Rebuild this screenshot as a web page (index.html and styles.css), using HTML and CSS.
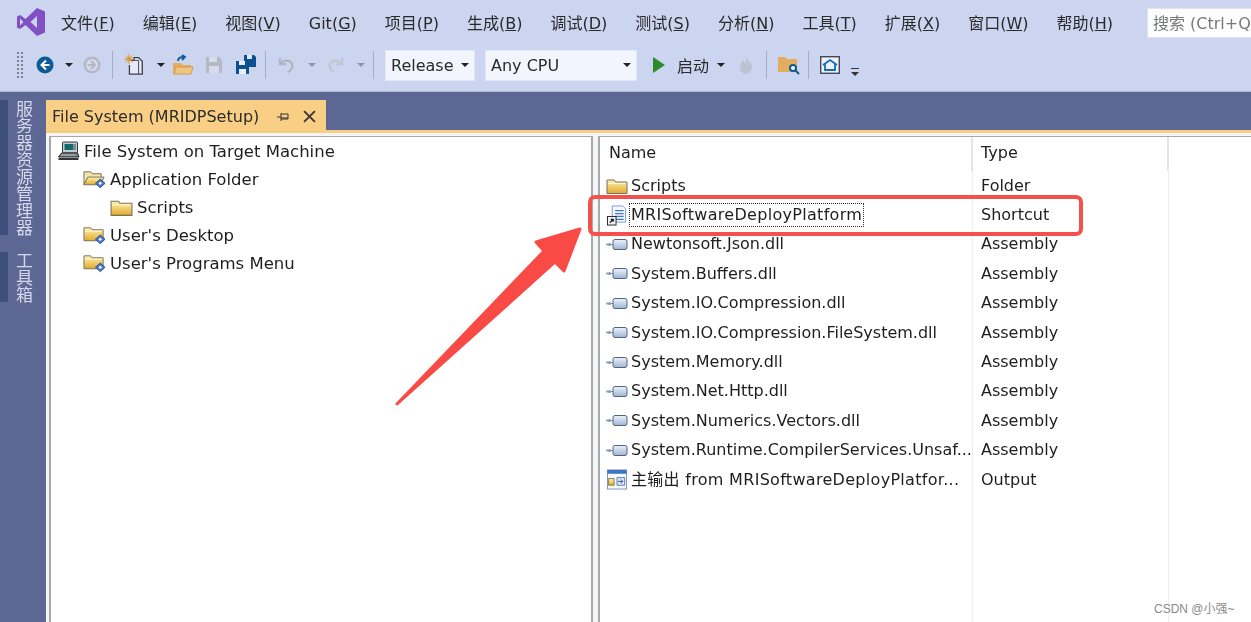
FILE: index.html
```html
<!DOCTYPE html>
<html lang="zh-CN">
<head>
<meta charset="utf-8">
<title>File System (MRIDPSetup)</title>
<link rel="stylesheet" href="styles.css">
</head>
<body>
<svg class="defs" width="0" height="0" aria-hidden="true">
  <defs>
    <linearGradient id="gold" x1="0" y1="0" x2="0" y2="1"><stop offset="0" stop-color="#fff3b0"/><stop offset="1" stop-color="#e0a92e"/></linearGradient>
    <linearGradient id="asm" x1="0" y1="0" x2="0" y2="1"><stop offset="0" stop-color="#eef3fa"/><stop offset="1" stop-color="#9db4d2"/></linearGradient>
    <symbol id="folder" viewBox="0 0 22 18">
      <path d="M1 3.500h7l1.500 2H21V17H1z" fill="url(#gold)" stroke="#77715c"/>
      <path d="M2 7h18" stroke="#fff8d4"/>
    </symbol>
    <symbol id="folder-sp" viewBox="0 0 24 20">
      <path d="M1 2.500h7l1.500 2H21V16H1z" fill="url(#gold)" stroke="#77715c"/>
      <path d="M2 6h18" stroke="#fff8d4"/>
      <path d="M18 10l5 4.500-5 4.500-5-4.500z" fill="#4a79c9" stroke="#2c4f91"/>
      <circle cx="18" cy="14.500" r="1.400" fill="#fff"/>
    </symbol>
    <symbol id="folder-open" viewBox="0 0 24 20">
      <path d="M1 2.500h7l1.500 2H19V9H5L1 16z" fill="#f4e4a8" stroke="#77715c"/>
      <path d="M1 16L5 8h17l-4 8z" fill="url(#gold)" stroke="#77715c"/>
      <path d="M18 10l5 4.500-5 4.500-5-4.500z" fill="#4a79c9" stroke="#2c4f91"/>
      <circle cx="18" cy="14.500" r="1.400" fill="#fff"/>
    </symbol>
    <symbol id="computer" viewBox="0 0 22 20">
      <rect x="5" y="1" width="15" height="11" rx="1" fill="#c7ccd2" stroke="#33383d"/>
      <rect x="7" y="3" width="9" height="6" fill="#14696f"/>
      <path d="M17.500 3v6" stroke="#6c7278" stroke-width="1.500"/>
      <path d="M4 12h16l1.500 4H1z" fill="#80868c" stroke="#22262a"/>
      <path d="M1 17h20v2H1z" fill="#33373b"/>
      <path d="M4 14h14" stroke="#e4e6e8" stroke-dasharray="1 1"/>
    </symbol>
    <symbol id="shortcut" viewBox="0 0 22 22">
      <path d="M6 1h11l3 3v14H6z" fill="#f4f8ff" stroke="#7f9bc9"/>
      <path d="M9 6h9M9 9h9M9 12h9M9 15h9" stroke="#3f74d6" stroke-width="1.300"/>
      <rect x="1" y="12" width="9" height="9" fill="#f2f2f2" stroke="#222"/>
      <path d="M3.500 18.500l3-3M4.500 15h2.500v2.500" stroke="#111" stroke-width="1.300" fill="none"/>
    </symbol>
    <symbol id="assembly" viewBox="0 0 22 14">
      <path d="M0 7h2" stroke="#9aa8bf" stroke-width="2"/>
      <circle cx="3.500" cy="7" r="1.500" fill="#7f90ad"/>
      <path d="M5 7h2" stroke="#7f90ad"/>
      <rect x="7" y="2" width="14" height="10" rx="2" fill="url(#asm)" stroke="#4e6484"/>
    </symbol>
    <symbol id="output" viewBox="0 0 22 22">
      <rect x="1" y="1" width="20" height="20" fill="#f5f8fd" stroke="#7b93b8"/>
      <path d="M1 1h20v4H1z" fill="#3f72c4"/>
      <path d="M2 10h6v7H2z" fill="url(#gold)" stroke="#857a55"/>
      <path d="M11 9h8v8h-8z" fill="#dbe7f8" stroke="#5a7db5"/>
      <path d="M12 13h5M15 11l2 2-2 2" stroke="#2456a8" fill="none"/>
    </symbol>
  </defs>
</svg>

<header class="menubar">
  <svg class="logo" viewBox="0 0 28 28"><path fill-rule="evenodd" fill="#8150c4" d="M20 0l8 3.500v21L20 28 8.500 17 3 21l-3-1.500v-11L3 7l5.500 4zm0 8l-6.500 6 6.500 6zM3 10.500v7L6.500 14z"/></svg>
  <nav class="menu">
    <span class="menu-item">文件(<u>F</u>)</span>
    <span class="menu-item">编辑(<u>E</u>)</span>
    <span class="menu-item">视图(<u>V</u>)</span>
    <span class="menu-item">Git(<u>G</u>)</span>
    <span class="menu-item">项目(<u>P</u>)</span>
    <span class="menu-item">生成(<u>B</u>)</span>
    <span class="menu-item">调试(<u>D</u>)</span>
    <span class="menu-item">测试(<u>S</u>)</span>
    <span class="menu-item">分析(<u>N</u>)</span>
    <span class="menu-item">工具(<u>T</u>)</span>
    <span class="menu-item">扩展(<u>X</u>)</span>
    <span class="menu-item">窗口(<u>W</u>)</span>
    <span class="menu-item">帮助(<u>H</u>)</span>
  </nav>
  <div class="search">搜索 (Ctrl+Q)</div>
</header>

<div class="toolbar">
  <span class="grip"></span>
  <svg class="tool w18" viewBox="0 0 18 18"><circle cx="9" cy="9" r="8.500" fill="#0e5a96"/><path d="M10 4.500L5.500 9l4.500 4.500M6 9h7.500" stroke="#fff" stroke-width="2" fill="none"/></svg>
  <span class="caret c-nav"></span>
  <svg class="tool w18 m-fwd" viewBox="0 0 18 18"><circle cx="9" cy="9" r="8.500" fill="#b3b8c4"/><circle cx="9" cy="9" r="6" fill="#d5dbec"/><path d="M8 5l4 4-4 4M4.500 9H12" stroke="#b3b8c4" stroke-width="2" fill="none"/></svg>
  <span class="sep s1"></span>
  <svg class="tool w22" viewBox="0 0 22 24"><path d="M8 7h3V4h5l4 4v14H6V12" fill="#e6eaf6" stroke="#3a3f48" stroke-width="1.400"/><path d="M11 7l5 0v15" fill="none" stroke="#3a3f48"/><circle cx="5.500" cy="5.500" r="2.500" fill="#d99a3a"/><path d="M5.500 0v11M0 5.500h11M1.500 1.500l8 8M9.500 1.500l-8 8" stroke="#d99a3a"/></svg>
  <span class="caret c-new"></span>
  <svg class="tool w22 m-open" viewBox="0 0 22 20"><path d="M1 8h8l2 2h8v9H1z" fill="#e3ad5f"/><path d="M2 19l2-7h17l-2 7z" fill="#f0c583" stroke="#d49a4a"/><path d="M6 6c0-3 2-4 6-4M10 0l3 2-3 3" stroke="#0e5a96" stroke-width="1.800" fill="none"/></svg>
  <svg class="tool w18 m-save" viewBox="0 0 18 18"><path d="M1 1h13l3 3v13H1z" fill="#b4b9c5"/><path d="M4 1h8v5H4zM4 10h10v7H4z" fill="#d7dcec"/></svg>
  <svg class="tool w22 m-saveall" viewBox="0 0 22 20"><path d="M9 0h10l2 2v10H9z" fill="#0e4f8f"/><path d="M12 0h5v4h-5z" fill="#dfe6f5"/><path d="M1 6h11l2 2v11H1z" fill="#0e4f8f"/><path d="M4 6h6v4H4zM4 14h7v5H4z" fill="#e8edf8"/></svg>
  <span class="sep s2"></span>
  <svg class="tool w18 m-undo" viewBox="0 0 18 20"><path d="M1 2v7h7M2 8c4-5 13-3 13 3 0 3-2 5-5 7" stroke="#aeb4c2" stroke-width="2.400" fill="none"/></svg>
  <span class="caret grey c-undo"></span>
  <svg class="tool w18 m-redo" viewBox="0 0 18 20"><path d="M17 2v7h-7M16 8C12 3 3 5 3 11c0 3 2 5 5 7" stroke="#c0c5d2" stroke-width="2.400" fill="none"/></svg>
  <span class="caret grey c-redo"></span>
  <span class="sep s3"></span>
  <div class="combo release">Release<span class="caret"></span></div>
  <div class="combo cpu">Any CPU<span class="caret"></span></div>
  <svg class="tool play" viewBox="0 0 12 16"><path d="M0 0l12 8-12 8z" fill="#2f8a2c"/></svg>
  <span class="start">启动</span>
  <span class="caret c-start"></span>
  <svg class="tool flame" viewBox="0 0 14 18"><path d="M7 0c1 4 6 6 6 11 0 4-3 7-6 7s-6-3-6-7c0-3 2-4 2-7 2 1 3 2 3 4 1-2 2-4 1-8z" fill="#bcc3d4"/></svg>
  <span class="sep s4"></span>
  <svg class="tool w22 m-find" viewBox="0 0 22 18"><path d="M0 1h7l2 2h10v13H0z" fill="#e3ad5f"/><circle cx="15" cy="12" r="3" fill="#fff" stroke="#0e5a96" stroke-width="2"/><path d="M17 14l4 4" stroke="#0e5a96" stroke-width="2"/></svg>
  <span class="sep s5"></span>
  <svg class="tool w20 m-home" viewBox="0 0 20 18"><rect x=".7" y=".7" width="18.600" height="16.600" fill="#eef1fa" stroke="#43495a" stroke-width="1.400"/><path d="M3 9l7-5 7 5M5 8v6h10V8" fill="none" stroke="#0e6fb5" stroke-width="1.800"/></svg>
  <span class="overflow"></span>
</div>

<div class="main">
  <aside class="rail">
    <div class="rail-tab tall"><span class="rail-bar"></span><span class="rail-text">服务器资源管理器</span></div>
    <div class="rail-tab short"><span class="rail-bar"></span><span class="rail-text">工具箱</span></div>
  </aside>
  <section class="doc">
    <div class="tabstrip">
      <div class="tab">
        <span>File System (MRIDPSetup)</span>
        <svg class="pin" viewBox="0 0 12 10"><path d="M0 5h4M4 1v8M4 2h7v5H4M4 6h7" stroke="#333" fill="none"/></svg>
        <svg class="close" viewBox="0 0 12 12"><path d="M1 1l10 10M11 1L1 11" stroke="#3a3a3a" stroke-width="1.800"/></svg>
      </div>
    </div>
    <div class="panes">
      <div class="pane tree">
        <div class="tree-row"><svg class="ico-tree"><use href="#computer"/></svg>File System on Target Machine</div>
        <div class="tree-row lvl1"><svg class="ico-tree"><use href="#folder-open"/></svg>Application Folder</div>
        <div class="tree-row lvl2"><svg class="ico-tree"><use href="#folder"/></svg>Scripts</div>
        <div class="tree-row lvl1"><svg class="ico-tree"><use href="#folder-sp"/></svg>User's Desktop</div>
        <div class="tree-row lvl1"><svg class="ico-tree"><use href="#folder-sp"/></svg>User's Programs Menu</div>
      </div>
      <div class="pane list">
        <div class="row head"><div class="cell name">Name</div><div class="cell type">Type</div></div>
        <div class="row"><div class="cell name"><svg class="ico"><use href="#folder"/></svg><span>Scripts</span></div><div class="cell type">Folder</div></div>
        <div class="row"><div class="cell name"><svg class="ico"><use href="#shortcut"/></svg><span class="focus wide">MRISoftwareDeployPlatform</span></div><div class="cell type">Shortcut</div></div>
        <div class="row"><div class="cell name"><svg class="ico"><use href="#assembly"/></svg><span>Newtonsoft.Json.dll</span></div><div class="cell type">Assembly</div></div>
        <div class="row"><div class="cell name"><svg class="ico"><use href="#assembly"/></svg><span>System.Buffers.dll</span></div><div class="cell type">Assembly</div></div>
        <div class="row"><div class="cell name"><svg class="ico"><use href="#assembly"/></svg><span>System.IO.Compression.dll</span></div><div class="cell type">Assembly</div></div>
        <div class="row"><div class="cell name"><svg class="ico"><use href="#assembly"/></svg><span>System.IO.Compression.FileSystem.dll</span></div><div class="cell type">Assembly</div></div>
        <div class="row"><div class="cell name"><svg class="ico"><use href="#assembly"/></svg><span>System.Memory.dll</span></div><div class="cell type">Assembly</div></div>
        <div class="row"><div class="cell name"><svg class="ico"><use href="#assembly"/></svg><span>System.Net.Http.dll</span></div><div class="cell type">Assembly</div></div>
        <div class="row"><div class="cell name"><svg class="ico"><use href="#assembly"/></svg><span>System.Numerics.Vectors.dll</span></div><div class="cell type">Assembly</div></div>
        <div class="row"><div class="cell name"><svg class="ico"><use href="#assembly"/></svg><span>System.Runtime.CompilerServices.Unsaf...</span></div><div class="cell type">Assembly</div></div>
        <div class="row"><div class="cell name"><svg class="ico"><use href="#output"/></svg><span class="wide">主输出 from MRISoftwareDeployPlatfor...</span></div><div class="cell type">Output</div></div>
        <div class="row fill"><div class="cell name"></div><div class="cell type"></div></div>
      </div>
    </div>
  </section>
</div>

<div class="callout-box"></div>
<svg class="callout-arrow" viewBox="0 0 1251 622"><path d="M397 404L544 251 536 242 580 229 564 271 555 262z" fill="#f94a45" stroke="#f94a45" stroke-width="3" stroke-linejoin="round"/></svg>
<div class="watermark">CSDN @小强~</div>
</body>
</html>
```

FILE: styles.css
```css
* { box-sizing: border-box; }
html, body { margin: 0; height: 100%; }
body {
  width: 1251px;
  height: 622px;
  overflow: hidden;
  position: relative;
  display: flex;
  flex-direction: column;
  background: #5c6893;
  color: #1e1e1e;
  font-family: "DejaVu Sans", "Noto Sans CJK SC", sans-serif;
  font-size: 16px;
}
.defs { position: absolute; }

/* the reference is a slightly soft, scaled capture */
.menubar, .toolbar, .main { filter: blur(.3px); }

/* menu bar */
.menubar {
  height: 46px;
  flex: none;
  display: flex;
  align-items: center;
  background: #ccd5f0;
  padding: 0 0 0 17px;
}
.logo { width: 28px; height: 28px; flex: none; margin-bottom: 2px; }
.menu {
  display: flex;
  gap: 28px;
  margin-left: 16px;
  font-size: 16px;
  white-space: nowrap;
  color: #2a2a2a;
}
.menu-item { display: block; height: 22px; line-height: 24px; }
.search {
  position: absolute;
  left: 1147px;
  top: 8px;
  width: 130px;
  height: 30px;
  background: #fdfdfd;
  border: 1px solid #dfe3ee;
  color: #77787c;
  font-size: 16px;
  line-height: 30px;
  padding-left: 5px;
  white-space: nowrap;
}

/* toolbar */
.toolbar {
  height: 46px;
  flex: none;
  display: flex;
  align-items: center;
  background: #ccd5f0;
  padding: 0 0 7px 16px;
  border-bottom: 1px solid #aeb6d0;
}
.grip {
  width: 8px;
  height: 28px;
  flex: none;
  background-image: radial-gradient(circle, #7b8296 1px, transparent 1.300px);
  background-size: 4px 4px;
}
.tool { flex: none; display: block; }
.w18 { width: 18px; height: 18px; margin-left: 12px; }
.w20 { width: 20px; height: 18px; }
.w22 { width: 22px; height: 22px; }
.caret {
  width: 0;
  height: 0;
  flex: none;
  border-left: 4px solid transparent;
  border-right: 4px solid transparent;
  border-top: 4px solid #222;
  display: block;
}
.caret.grey { border-top-color: #8f94a3; }
.c-nav { margin-left: 11px; }
.w18.m-fwd { margin-left: 10px; }
.sep { width: 1px; height: 28px; background: #a3adca; flex: none; }
.s1 { margin: 0 10px 0 11px; }
.c-new { margin: 0 7px 0 12px; }
.m-open { margin-left: 0; }
.w18.m-save { margin-left: 11px; }
.m-saveall { margin-left: 12px; }
.s2 { margin: 0 12px 0 8px; }
.w18.m-undo { margin-left: 0; }
.c-undo { margin-left: 12px; }
.w18.m-redo { margin-left: 10px; }
.c-redo { margin-left: 13px; }
.s3 { margin: 0 11px 0 8px; }
.combo {
  height: 31px;
  background: #f2f5fd;
  border: 1px solid #e3e8f6;
  display: flex;
  align-items: center;
  justify-content: space-between;
  padding: 0 5px;
  flex: none;
  color: #2a2a2a;
  font-size: 16px;
}
.release { width: 90px; }
.cpu { width: 152px; margin-left: 10px; }
.play { width: 12px; height: 16px; margin-left: 16px; }
.start { font-family: "Noto Sans CJK SC", sans-serif; margin-left: 12px; color: #2a2a2a; }
.c-start { margin-left: 8px; }
.flame { width: 14px; height: 18px; margin-left: 14px; }
.s4 { margin: 0 11px 0 13px; }
.m-find { margin-left: 0; height: 20px; }
.s5 { margin: 0 11px 0 8px; }
.overflow {
  margin: 14px 0 0 11px;
  width: 8px;
  height: 8px;
  flex: none;
  border-top: 1px solid #333;
  position: relative;
}
.overflow::after {
  content: "";
  position: absolute;
  left: 0;
  top: 3px;
  border-left: 4px solid transparent;
  border-right: 4px solid transparent;
  border-top: 4px solid #333;
}

/* body */
.main { flex: 1; display: flex; min-height: 0; }
.rail {
  width: 46px;
  flex: none;
  padding-top: 8px;
  display: flex;
  flex-direction: column;
  gap: 17px;
}
.rail-tab { display: flex; }
.tall { height: 135px; }
.short { height: 50px; }
.rail-bar { width: 8px; background: #3e4f7e; flex: none; }
.rail-text {
  writing-mode: vertical-rl;
  font-family: "Noto Sans CJK SC", sans-serif;
  font-size: 17px;
  line-height: 17px;
  color: #d3d9ea;
  margin-left: 8px;
  white-space: nowrap;
}
.doc { flex: 1; min-width: 0; display: flex; flex-direction: column; }
.tabstrip {
  height: 41px;
  flex: none;
  padding-top: 8px;
  border-bottom: 3px solid #f7cd82;
}
.tab {
  width: 280px;
  height: 30px;
  background: #f9cf85;
  display: flex;
  align-items: center;
  padding: 3px 0 0 6px;
  font-size: 16px;
  color: #2c2c2c;
  white-space: nowrap;
}
.pin { width: 12px; height: 10px; margin-left: 18px; flex: none; }
.close { width: 13px; height: 13px; margin-left: 14px; flex: none; }
.panes {
  flex: 1;
  min-height: 0;
  display: flex;
  background: #f4f5f6;
  padding: 3px 0 0 3px;
  gap: 5px;
}
.pane {
  background: #fff;
  border-style: solid;
  border-color: #a8a8a8;
  border-width: 1px 0 0 2px;
}
.tree {
  width: 544px;
  flex: none;
  padding: 0 0 0 6px;
  font-size: 16.500px;
  border-right-width: 2px;
}
.tree-row {
  height: 28px;
  display: flex;
  align-items: center;
  white-space: nowrap;
}
.lvl1 { padding-left: 26px; }
.lvl2 { padding-left: 53px; }
.ico-tree { width: 23px; height: 20px; margin-right: 4px; flex: none; }

.list { flex: 1; min-width: 0; display: flex; flex-direction: column; }
.row { height: 29.400px; flex: none; display: flex; font-size: 16px; line-height: 20px; }
.row.head { height: 34px; }
.row.fill { flex: 1; }
.cell {
  border-right: 1px solid #eaf0f7;
  display: flex;
  align-items: center;
  white-space: nowrap;
}
.head .cell { border-right: 2px solid #e6e6e6; padding-bottom: 2px; }
.cell.name { width: 373px; padding-left: 6px; flex: none; }
.cell.type { width: 196px; padding-left: 8px; flex: none; }
.head .name { padding-left: 9px; }
.ico { width: 22px; height: 21px; margin-right: 3px; flex: none; }
.focus { outline: 1px dotted #333; outline-offset: 1px; }
.wide { letter-spacing: .3px; }

/* annotations drawn on top of the screenshot */
.callout-box {
  position: absolute;
  left: 588px;
  top: 195px;
  width: 495px;
  height: 41px;
  border: 4px solid #f4504c;
  border-radius: 7px;
}
.callout-arrow {
  position: absolute;
  left: 0;
  top: 0;
  width: 1251px;
  height: 622px;
  pointer-events: none;
}
.watermark {
  position: absolute;
  left: 1154px;
  top: 599px;
  font-family: "Liberation Sans", "Noto Sans CJK SC", sans-serif;
  font-size: 12px;
  color: #8a8a8a;
}
```
